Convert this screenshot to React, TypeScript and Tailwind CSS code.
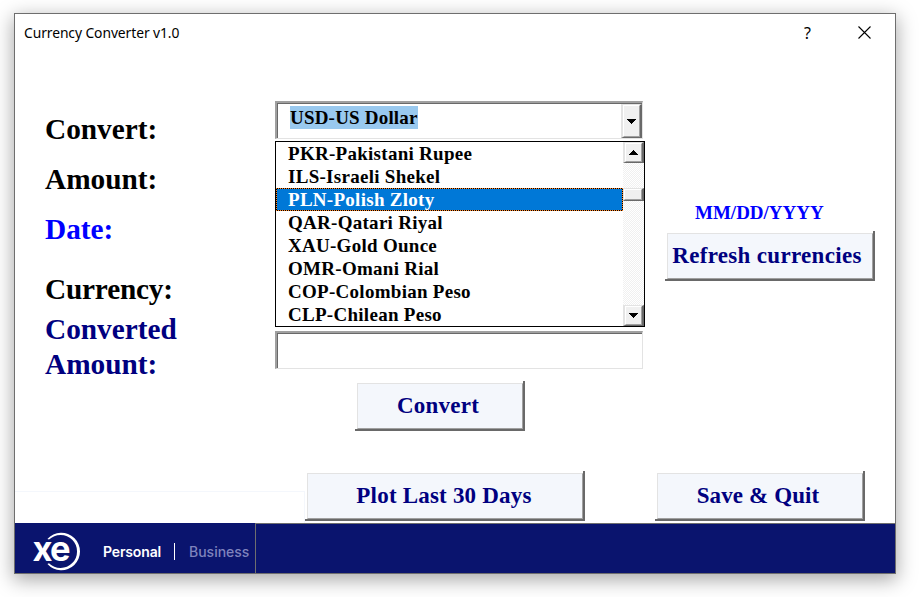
import React from "react";

const currencies = [
  "PKR-Pakistani Rupee",
  "ILS-Israeli Shekel",
  "PLN-Polish Zloty",
  "QAR-Qatari Riyal",
  "XAU-Gold Ounce",
  "OMR-Omani Rial",
  "COP-Colombian Peso",
  "CLP-Chilean Peso",
];
const selected = "PLN-Polish Zloty";

function RaisedButton({ label, className, textClass }: { label: string; className: string; textClass: string }) {
  return (
    <button
      className={`block h-[50px] shrink-0 border-r-2 border-b-2 border-[#696969] pt-[2px] pl-[2px] ${className}`}
    >
      <span
        className={`flex h-full w-full items-center justify-center border border-t-[#e3e3e3] border-r-[#a0a0a0] border-b-[#a0a0a0] border-l-[#e3e3e3] bg-[#f4f7fc] pb-[1px] text-[23px] leading-none font-bold whitespace-nowrap text-[#000080] ${textClass}`}
      >
        {label}
      </span>
    </button>
  );
}

function SunkenField({ children }: { children?: React.ReactNode }) {
  return (
    <div className="h-[38px] w-[368px] border-t-2 border-r border-b border-l-2 border-t-[#a0a0a0] border-r-[#e3e3e3] border-b-[#e3e3e3] border-l-[#a0a0a0]">
      <div className="flex h-full w-full border-t border-l border-[#696969] bg-white">{children}</div>
    </div>
  );
}

function ScrollButton({ up, className }: { up?: boolean; className: string }) {
  return (
    <div
      className={`shrink-0 border-t border-r-2 border-b border-l-2 border-t-[#e3e3e3] border-r-[#696969] border-b-[#696969] border-l-[#e3e3e3] ${className}`}
    >
      <div className="flex h-full w-full items-center justify-center border border-t-white border-r-[#a0a0a0] border-b-[#a0a0a0] border-l-white bg-[#f0f0f0]">
        <svg width="9" height="5" viewBox="0 0 9 5" shapeRendering="crispEdges" className="shrink-0">
          {up ? (
            <path d="M4 0h1v1h1v1h1v1h1v1h1v1H0V4h1V3h1V2h1V1h1z" />
          ) : (
            <path d="M0 0h9v1H8v1H7v1H6v1H5v1H4V4H3V3H2V2H1V1H0z" />
          )}
        </svg>
      </div>
    </div>
  );
}

export default function App() {
  return (
    <div className="h-[597px] w-[921px] overflow-hidden bg-white pt-[13px] pl-[14px] font-['Liberation_Serif','Times_New_Roman',serif]">
      <div className="flex h-[561px] w-[882px] flex-col border border-[#6e6e6e] bg-white shadow-[0_5px_18px_1px_rgba(0,0,0,0.34)]">
        <header className="flex h-[37px] shrink-0 items-center pl-[9px] font-['Noto_Sans',sans-serif] text-black">
          <span className="origin-left scale-x-[0.925] text-[15px] tracking-[-0.1px] whitespace-nowrap">
            Currency Converter v1.0
          </span>
          <span className="mr-[47px] ml-auto text-[16px]">?</span>
          <svg width="13" height="13" viewBox="0 0 13 13" className="mr-[24px]" stroke="#000" strokeWidth="1.1">
            <path d="M.5.5l12 12M12.5.5l-12 12" />
          </svg>
        </header>

        <main className="flex h-[420px] shrink-0 pl-[30px]">
          <div className="w-[230px] pt-[61px] text-[29.3px] leading-[35px] font-bold text-black">
            <div className="h-[50px]">Convert:</div>
            <div className="h-[50px]">Amount:</div>
            <div className="h-[60px] text-[#0000ff]">Date:</div>
            <div className="h-[40px] tracking-[-0.2px]">Currency:</div>
            <div className="w-[200px] text-[#000080]">
              Converted
              <br />
              Amount:
            </div>
          </div>

          <div className="relative w-[370px] pt-[50px]">
            <SunkenField>
              <div className="flex-1 pt-[2px] pl-[12px]">
                <span className="inline-block h-[23px] bg-[#99c9ef] text-[19px] leading-[24px] font-bold tracking-[0.2px] whitespace-nowrap text-black">
                  USD-US Dollar
                </span>
              </div>
              <ScrollButton className="h-[34px] w-[21px]" />
            </SunkenField>
            <div className="mt-[192px]">
              <SunkenField />
            </div>
            <div className="mt-[12px] pl-[80px]">
              <RaisedButton label="Convert" className="w-[170px]" textClass="pr-[4px] tracking-[0.25px]" />
            </div>

            <div className="absolute top-[90px] left-0 flex h-[186px] w-[370px] border border-black bg-white">
              <ul className="flex-1 text-[19px] leading-[23px] font-bold tracking-[0.28px] whitespace-nowrap text-black">
                {currencies.map((name) =>
                  name === selected ? (
                    <li
                      key={name}
                      className="h-[23px] bg-[linear-gradient(90deg,#ff8728_50%,#000_50%)] bg-[length:2px_2px] py-px"
                    >
                      <div className="bg-[linear-gradient(180deg,#000_50%,#ff8728_50%)] bg-[length:2px_2px] px-px">
                        <div className="h-[21px] bg-[#0078d7] pl-[11px] leading-[21px] text-white">{name}</div>
                      </div>
                    </li>
                  ) : (
                    <li key={name} className="h-[23px] pl-[12px]">
                      {name}
                    </li>
                  ),
                )}
              </ul>
              <div className="flex w-[21px] flex-col bg-[conic-gradient(#fff_25%,#f0f0f0_0_50%,#fff_0_75%,#f0f0f0_0)] bg-[length:2px_2px]">
                <ScrollButton up className="h-[21px]" />
                <div className="mt-[25px] h-[13px] border-t border-r-2 border-b border-l border-t-[#e3e3e3] border-r-[#696969] border-b-[#696969] border-l-[#e3e3e3]">
                  <div className="h-full border border-t-white border-r-[#a0a0a0] border-b-[#a0a0a0] border-l-white bg-[#f0f0f0]" />
                </div>
                <ScrollButton className="mt-auto h-[21px]" />
              </div>
            </div>
          </div>

          <div className="pt-[149px] pl-[20px]">
            <div className="h-[31px] pl-[30px] text-[19px] leading-[26px] font-bold text-[#0000ff]">MM/DD/YYYY</div>
            <RaisedButton label="Refresh currencies" className="w-[210px]" textClass="pr-[6px] tracking-[0.32px]" />
          </div>
        </main>

        <div className="flex h-[52px] shrink-0">
          <div className="mt-[20px] w-[290px] border-t border-r border-[#f4f7fc]" />
          <RaisedButton label="Plot Last 30 Days" className="w-[280px]" textClass="pr-[2px] tracking-[0.2px]" />
          <RaisedButton label="Save &amp; Quit" className="ml-[70px] w-[210px]" textClass="pr-[4px] tracking-[0.12px]" />
        </div>

        <footer className="flex h-[50px] shrink-0 bg-[#0a146e] font-['Inter',sans-serif]">
          <div className="flex w-[240px] items-center">
            <svg width="50" height="50" viewBox="32 523 50 50" className="ml-[17px] shrink-0">
              <path d="M47.4 539A18.7 18.7 0 1 1 47.4 564L49 563.2A16.5 16.5 0 1 0 49 539.6Z" fill="#fff" />
              <text
                x="32.6"
                y="561"
                fontSize="34.5"
                fontWeight="700"
                fill="#fff"
                stroke="#0a146e"
                strokeWidth="1"
                paintOrder="stroke"
                letterSpacing="-1.8"
                fontFamily="Inter"
              >
                xe
              </text>
            </svg>
            <span className="ml-[21px] w-[58px] pt-[7px] text-[14px] font-semibold tracking-[-0.15px] text-white">
              Personal
            </span>
            <span className="mt-[7px] ml-[13px] h-[17px] w-px bg-white" />
            <span className="ml-[14px] pt-[7px] text-[14px] font-medium text-[#7f83bd]">Business</span>
          </div>
          <div className="flex-1 border-t border-l border-[#6e6e6e]" />
        </footer>
      </div>
    </div>
  );
}
